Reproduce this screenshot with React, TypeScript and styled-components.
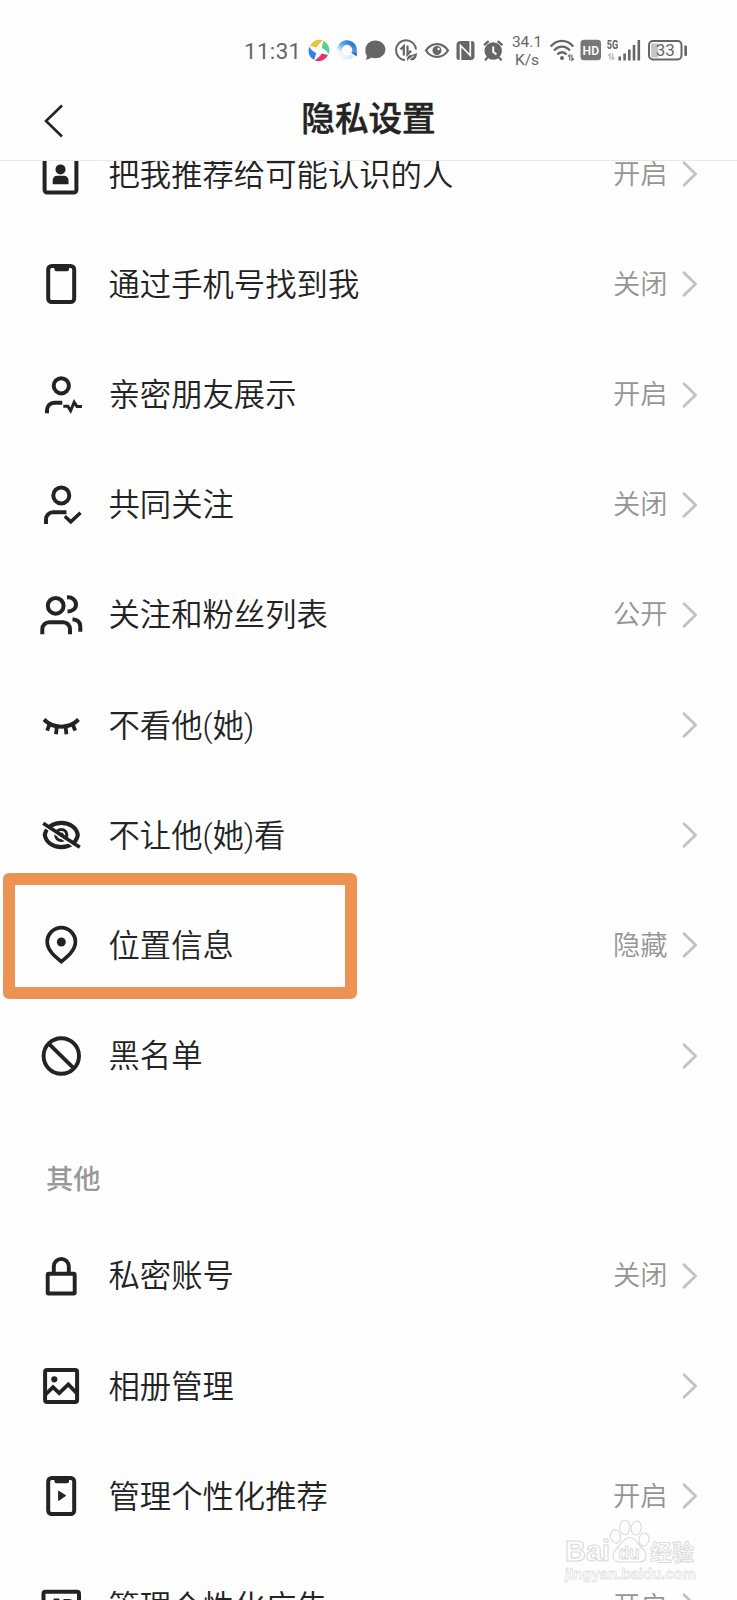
import React from 'react';
import styled, { createGlobalStyle } from 'styled-components';

const INK = '#232323';
const STATUS = '#666';

const GlobalStyle = createGlobalStyle`
  html, body {
    margin: 0;
    padding: 0;
    background: #fefefe;
  }
  body {
    font-family: Roboto, 'Noto Sans CJK SC', sans-serif;
    color: ${INK};
    overflow: hidden;
  }
`;

const Screen = styled.main`
  position: relative;
  display: flex;
  flex-direction: column;
  width: 737px;
  height: 1600px;
  overflow: hidden;
  background: #fefefe;
`;

const StatusBar = styled.div`
  display: flex;
  align-items: center;
  height: 62px;
  padding: 20px 0 0 244px;
  color: ${STATUS};
`;

const Clock = styled.span`
  width: 62px;
  font-size: 22.3px;
  line-height: 26px;
  letter-spacing: 0.4px;
`;

const Speed = styled.span`
  display: flex;
  flex-direction: column;
  width: 38px;
  font-size: 15.5px;
  line-height: 18px;
  text-align: center;
  white-space: nowrap;
`;

const GlyphSvg = styled.svg`
  flex: none;
  display: block;
  height: 28px;
`;

const Header = styled.header`
  display: grid;
  grid-template-columns: 110px 1fr 110px;
  align-items: center;
  height: 78px;
  border-bottom: 1px solid #e8e8e8;
`;

const BackButton = styled.button`
  display: flex;
  width: 24px;
  height: 36px;
  margin: 0 0 1px 42px;
  padding: 0;
  border: 0;
  background: none;
`;

const Title = styled.h1`
  margin: 0 0 3px;
  font-size: 33.6px;
  line-height: 40px;
  font-weight: 500;
  text-align: center;
  -webkit-text-stroke: 0.5px ${INK};
`;

const Viewport = styled.section`
  flex: 1;
  min-height: 0;
  overflow: hidden;
`;

const List = styled.div`
  display: flex;
  flex-direction: column;
  margin-top: -41.8px;
`;

const Row = styled.div`
  position: relative;
  display: flex;
  align-items: center;
  flex: none;
  height: 110.17px;
  padding: 0 38px 0 37px;
`;

const IconSvg = styled.svg`
  flex: none;
  width: 48px;
  height: 48px;
  fill: none;
  stroke: ${INK};
  stroke-width: 4;
`;

const Label = styled.span`
  flex: 1;
  margin-left: 23.5px;
  padding-top: 3px;
  font-size: 31.35px;
  line-height: 44px;
  font-weight: 350;
  white-space: nowrap;
`;

const Value = styled.span`
  margin-right: 13.5px;
  padding-top: 1px;
  font-size: 27.3px;
  line-height: 40px;
  font-weight: 350;
  color: #959595;
`;

const SectionTitle = styled.h2`
  flex: none;
  height: 84.2px;
  margin: 0;
  padding: 26px 0 0 46px;
  line-height: 86px;
  font-size: 27.3px;
  font-weight: 500;
  color: #999;
`;

const Highlight = styled.div`
  position: absolute;
  left: 3px;
  top: -17.5px;
  width: 354px;
  height: 126px;
  box-sizing: border-box;
  border: 12px solid #ec9252;
  border-radius: 6px;
`;

const Watermark = styled.svg`
  position: absolute;
  left: 560px;
  top: 1516px;
  width: 142px;
  height: 74px;
  font-family: 'Liberation Sans', 'Noto Sans CJK SC', sans-serif;
`;

type IconName =
  | 'contact' | 'phone' | 'pulse' | 'check' | 'people' | 'closedEye'
  | 'hiddenEye' | 'pin' | 'ban' | 'lock' | 'album' | 'phonePlay' | 'ad';

const PhoneBody = () => (
  <>
    <rect x="-12.8" y="-18" width="26" height="36" rx="3.500" />
    <path d="M-7.500-19H8v4.200a2 2 0 0 1-2 2H-4.500a2 2 0 0 1-2-2z" fill={INK} stroke="none" />
  </>
);

const drawings: Record<IconName, React.ReactNode> = {
  contact: (
    <>
      <rect x="-16.400" y="-18" width="31.800" height="36.500" rx="2.500" />
      <circle cx="-.5" cy="-4.600" r="5" fill={INK} stroke="none" />
      <path d="M-8.300 10.200V6a4.300 4.300 0 0 1 4.300-4.300h7A4.300 4.300 0 0 1 7.500 6v4.200z" fill={INK} stroke="none" />
    </>
  ),
  phone: <PhoneBody />,
  pulse: (
    <>
      <circle cx=".3" cy="-9.200" r="7.600" />
      <path d="M-14 18.200V15a7.200 7.200 0 0 1 7.200-7.200H1.300" />
      <path d="M2.300 11.300H6.900l2.700 4.500 3.600-8.600 2.800 4.400H21" strokeWidth="3" />
    </>
  ),
  check: (
    <>
      <circle cx=".3" cy="-9.600" r="8" />
      <path d="M-15 19V14.300a7 7 0 0 1 7-7H5.500" />
      <path d="M3.800 11.200l6 5.600L19.500 7.700" strokeWidth="3.500" />
    </>
  ),
  people: (
    <>
      <circle cx="-5.300" cy="-9.200" r="7.900" />
      <path d="M-18.700 19.200V14.200a7 7 0 0 1 7-7H2a7 7 0 0 1 7 7v5" />
      <path d="M6-17.600C11.500-18 15-14.500 15-10.500S11.500-3.500 6.500-3.500M11.500 4.200c5 .4 7.800 3.300 7.800 7.500v5" />
    </>
  ),
  closedEye: (
    <>
      <path d="M-17-5.500C-8 4 8.500 4 17.500-5.500" />
      <path d="M-11.700 0l-2.200 5.600M-4.200 2l-.8 7.200M4.600 2l.8 7.200M12 0l2.200 5.600" strokeWidth="3.800" />
    </>
  ),
  hiddenEye: (
    <>
      <path d="M-16.200 0C-15-7.500-8-12.100 .3-12.100S15.600-7.500 16.800 0C15.600 7.500 8.600 12.100 .3 12.100S-15 7.500-16.200 0z" strokeWidth="4.200" />
      <circle cx=".3" cy="0" r="5.500" strokeWidth="3.200" />
      <circle cx=".3" cy="0" r="2.400" fill={INK} stroke="none" />
      <path d="M-19-9.800L17 14" stroke="#fefefe" strokeWidth="1.800" />
      <path d="M-17.800-11.700L18.800 12.300" strokeWidth="3.600" />
    </>
  ),
  pin: (
    <>
      <path d="M.3 16.600C-5.500 12-13.800 5.500-13.800-3.200a14.100 14.100 0 0 1 28.200 0C14.400 5.500 6.100 12 .3 16.600z" strokeWidth="3.700" />
      <circle cx=".3" cy="-3" r="4.500" fill={INK} stroke="none" />
    </>
  ),
  ban: (
    <>
      <circle cx=".3" cy="0" r="17.700" strokeWidth="3.900" />
      <path d="M-12.300-12.300L12.900 12.300" strokeWidth="3.900" />
    </>
  ),
  lock: (
    <>
      <rect x="-13.300" y="-2.200" width="27" height="19.700" rx="1" strokeWidth="3.900" />
      <path d="M-7.200-3v-6.600a7.500 7.500 0 0 1 15 0V-3" strokeWidth="3.900" />
    </>
  ),
  album: (
    <>
      <rect x="-15.900" y="-15.900" width="32" height="31.800" rx="2" />
      <circle cx="-6.700" cy="-6.700" r="3.100" fill={INK} stroke="none" />
      <path d="M-15.500 8.500L-8 1.200l6.200 6L7.300-1.500 16 7.500" strokeWidth="3.800" />
    </>
  ),
  phonePlay: (
    <>
      <PhoneBody />
      <path d="M-2.300-4.800L4.600-.4-2.300 4.400z" fill={INK} stroke={INK} strokeWidth="1" strokeLinejoin="round" />
    </>
  ),
  ad: (
    <>
      <rect x="-17.500" y="-14.200" width="35.500" height="30" rx="2" />
      <path d="M-10 8l4-14h3l4 14M4-5.500h3.500a6 6 0 0 1 0 12H4z" strokeWidth="3" />
    </>
  ),
};

const Icon = ({ name }: { name: IconName }) => (
  <IconSvg viewBox="-24 -24 48 48">{drawings[name]}</IconSvg>
);

const Chevron = () => (
  <svg width="18" height="30" viewBox="0 0 18 30" fill="none">
    <path d="M3 3.800L14.600 15 3 26.200" stroke="#c2c2c2" strokeWidth="2.800" strokeLinecap="round" strokeLinejoin="round" />
  </svg>
);

const Glyph = ({ width, children }: { width: number; children: React.ReactNode }) => (
  <GlyphSvg width={width} viewBox={`${-width / 2} -14 ${width} 28`} fill="none" stroke={STATUS} strokeWidth="2">
    {children}
  </GlyphSvg>
);

const StatusIcons = () => (
  <>
    <Glyph width={26}>
      <g stroke="none" transform="translate(0 -.5)">
        <path d="M-8.800-4.500C-6-10.500 0-12 4-9.800 2-8.500-1-6-2.500-3z" fill="#e8c33c" />
        <path d="M4.300-9.400C9.800-7 11.500-1 9.800 3.700 8.500 1.500 6-1 2.800-2.500z" fill="#55d195" />
        <path d="M9 4.600C6 10.500 0 12-4.300 9.700-2 8.500 1 6 2.600 3z" fill="#e9355f" />
        <path d="M-4.800 9.300C-10 7-11.500 1-9.700-3.700-8.500-1.500-6 1-2.800 2.800z" fill="#3b7df0" />
      </g>
    </Glyph>
    <Glyph width={30}>
      <defs>
        <linearGradient id="ring" x1="1" y1="0" x2="0" y2="1">
          <stop offset="0" stopColor="#2864d8" />
          <stop offset=".5" stopColor="#65aef0" />
          <stop offset=".85" stopColor="#f1f8fe" />
        </linearGradient>
        <linearGradient id="ringLow" x1="1" y1="0" x2="0" y2="0">
          <stop offset="0" stopColor="#d6eafb" />
          <stop offset="1" stopColor="#eaf5fe" />
        </linearGradient>
      </defs>
      <path d="M5.500 4.500A7.600 7.600 0 0 1-5.500 4.500" stroke="url(#ringLow)" strokeWidth="4.500" />
      <path d="M-5.500 4.600A7.600 7.600 0 1 1 6.500 3" stroke="url(#ring)" strokeWidth="4.800" />
      <path d="M4 1.500H9.800V5.500z" fill="#2d68c8" stroke="none" />
    </Glyph>
    <Glyph width={26}>
      <path d="M.4-10.500c5.700 0 10 4 10 9s-4.300 8.800-10 8.800c-1.700 0-3-.3-4.300-.8C-5.500 8-7.500 8.600-9.500 8.500c1.200-1.300 1.500-2.400 1.300-3.800A8.600 8.600 0 0 1-9.600-1.500c0-5 4.300-9 10-9z" fill={STATUS} stroke="none" />
    </Glyph>
    <Glyph width={36}>
      <path d="M10-1.500A10 10 0 1 0-1 9.200" strokeWidth="2" />
      <path d="M-5.500-1.500l3.300-3.300V4.500M1.500-5.500v9l3.600-3.700" strokeWidth="2.200" />
      <path d="M1 7.500C2 2.500 7 4.800 11 2 11 8 7 11 3 8.300L1 10.500" fill={STATUS} stroke="none" />
      <path d="M1.500 9.500L8 4.800" stroke="#fefefe" strokeWidth="1" />
    </Glyph>
    <Glyph width={26}>
      <path d="M-11-.5C-5.500-9 5.500-9 11-.5 5.500 8-5.500 8-11-.5z" strokeWidth="2.300" />
      <circle cx="0" cy="-.5" r="4.500" fill={STATUS} stroke="none" />
      <circle cx="1.600" cy="-2" r="1.200" fill="#fefefe" stroke="none" />
    </Glyph>
    <Glyph width={30}>
      <path d="M-8.500-6a4 4 0 0 1 4-4H6.500a3 3 0 0 1 3 3V5a4 4 0 0 1-4 4H-6a2.500 2.500 0 0 1-2.500-2.500z" fill={STATUS} stroke="none" />
      <path d="M-4.500 9V-5.500L5.300 4.500V-10" stroke="#fefefe" strokeWidth="1.700" />
    </Glyph>
    <Glyph width={28}>
      <circle cx="-.8" cy="0" r="8.700" fill={STATUS} stroke="none" />
      <path d="M-10-5.800l4.700-4M8.400-5.800l-4.700-4M-6.500 6.500l-2.500 2.800M5 6.500l2.500 2.800" strokeWidth="2.300" />
      <path d="M-.8-4.500V.7L2.400 3.500" stroke="#fefefe" strokeWidth="2" />
    </Glyph>
    <Speed>
      <span>34.1</span>
      <span>K/s</span>
    </Speed>
    <Glyph width={32}>
      <path d="M-11.300-4.500C-5-12 5-12 11.300-4.500M-8-.5C-3.500-5.800 3.500-5.800 8-.5M-4.600 3.500C-2 .5 2 .5 4.600 3.500" strokeWidth="2.300" />
      <circle cx="0" cy="7" r="2" fill={STATUS} stroke="none" />
      <path d="M5.800 5.500L7.800 4v5.500M10 3.500v5.800l2-1.800" strokeWidth="1.200" />
    </Glyph>
    <Glyph width={26}>
      <rect x="-10.500" y="-11.200" width="20.500" height="20.400" rx="3.500" fill="#777" stroke="none" />
      <text x="-.2" y="3.700" fontSize="13.200" fontWeight="600" textAnchor="middle" textLength="16.500" lengthAdjust="spacingAndGlyphs" fill="#fefefe" stroke="none">HD</text>
    </Glyph>
    <Glyph width={40}>
      <text x="-17.300" y="-2" fontSize="12" fontWeight="700" textLength="11.500" lengthAdjust="spacingAndGlyphs" fill={STATUS} stroke="none">5G</text>
      <path d="M-16 4.500l2-1.500v5.500M-11.500 2.500v5.800l2-1.800" stroke="#bbb" strokeWidth="1.500" />
      <path d="M-4.300 5.500v4M.6 2.500v7M5.300-1.500v11M10-6v15.500M14.800-11v20.500" strokeWidth="2.600" />
    </Glyph>
    <Glyph width={44}>
      <rect x="-14.800" y="-7.500" width="7" height="14" fill="#c4c4c4" stroke="none" />
      <rect x="-17" y="-10" width="32.500" height="18.500" rx="4" strokeWidth="2" />
      <rect x="18.300" y="-5.500" width="2.700" height="10.500" rx="1" fill={STATUS} stroke="none" />
      <text x="-.7" y="5.400" fontSize="17" textAnchor="middle" fill={STATUS} stroke="none">33</text>
    </Glyph>
  </>
);

interface Setting {
  icon: IconName;
  label: string;
  value?: string;
  highlighted?: boolean;
}

const relations: Setting[] = [
  { icon: 'contact', label: '把我推荐给可能认识的人', value: '开启' },
  { icon: 'phone', label: '通过手机号找到我', value: '关闭' },
  { icon: 'pulse', label: '亲密朋友展示', value: '开启' },
  { icon: 'check', label: '共同关注', value: '关闭' },
  { icon: 'people', label: '关注和粉丝列表', value: '公开' },
  { icon: 'closedEye', label: '不看他(她)' },
  { icon: 'hiddenEye', label: '不让他(她)看' },
  { icon: 'pin', label: '位置信息', value: '隐藏', highlighted: true },
  { icon: 'ban', label: '黑名单' },
];

const others: Setting[] = [
  { icon: 'lock', label: '私密账号', value: '关闭' },
  { icon: 'album', label: '相册管理' },
  { icon: 'phonePlay', label: '管理个性化推荐', value: '开启' },
  { icon: 'ad', label: '管理个性化广告', value: '开启' },
];

const SettingRow = ({ icon, label, value, highlighted }: Setting) => (
  <Row>
    <Icon name={icon} />
    <Label>{label}</Label>
    {value && <Value>{value}</Value>}
    <Chevron />
    {highlighted && <Highlight />}
  </Row>
);

const BaiduMark = () => (
  <Watermark viewBox="0 0 142 74" fill="#fefefe" stroke="#dadada" strokeWidth="1.100" fontWeight="700">
    <g strokeLinejoin="round">
      <text x="5" y="45" fontSize="29" textLength="45" lengthAdjust="spacingAndGlyphs">Bai</text>
      <text x="90" y="44" fontSize="22" textLength="44" lengthAdjust="spacingAndGlyphs" strokeWidth=".9">经验</text>
      <text x="5" y="63" fontSize="15.500" stroke="#e2e2e2" strokeWidth=".8" textLength="131" lengthAdjust="spacingAndGlyphs">jingyan.baidu.com</text>
    </g>
    <ellipse cx="55.500" cy="20.500" rx="5" ry="6.800" transform="rotate(-12 55.500 20.500)" />
    <ellipse cx="64.700" cy="11.500" rx="5" ry="7.200" />
    <ellipse cx="76.300" cy="12" rx="5" ry="7" transform="rotate(8 76.300 12)" />
    <ellipse cx="84" cy="23.500" rx="5" ry="6.500" transform="rotate(10 84 23.500)" />
    <path d="M69.500 21.500c5.500 0 7.500 5 11 9 4 4 6.500 6.500 5.500 10.500-1.200 4.800-5 5.500-9 5h-15c-4 .5-8-.5-9-5-.8-4 2-7 5.500-10.500s5.500-9 11-9z" />
    <text x="58.500" y="43" fontSize="18" textLength="21" lengthAdjust="spacingAndGlyphs" strokeWidth=".9">du</text>
  </Watermark>
);

export default function App() {
  return (
    <Screen>
      <GlobalStyle />
      <StatusBar>
        <Clock>11:31</Clock>
        <StatusIcons />
      </StatusBar>
      <Header>
        <BackButton aria-label="返回">
          <svg width="24" height="36" viewBox="0 0 24 36" fill="none">
            <path d="M20 2.500L4 18l16 15.500" stroke={INK} strokeWidth="2.600" />
          </svg>
        </BackButton>
        <Title>隐私设置</Title>
      </Header>
      <Viewport>
        <List>
          {relations.map((s) => <SettingRow key={s.label} {...s} />)}
          <SectionTitle>其他</SectionTitle>
          {others.map((s) => <SettingRow key={s.label} {...s} />)}
        </List>
      </Viewport>
      <BaiduMark />
    </Screen>
  );
}
